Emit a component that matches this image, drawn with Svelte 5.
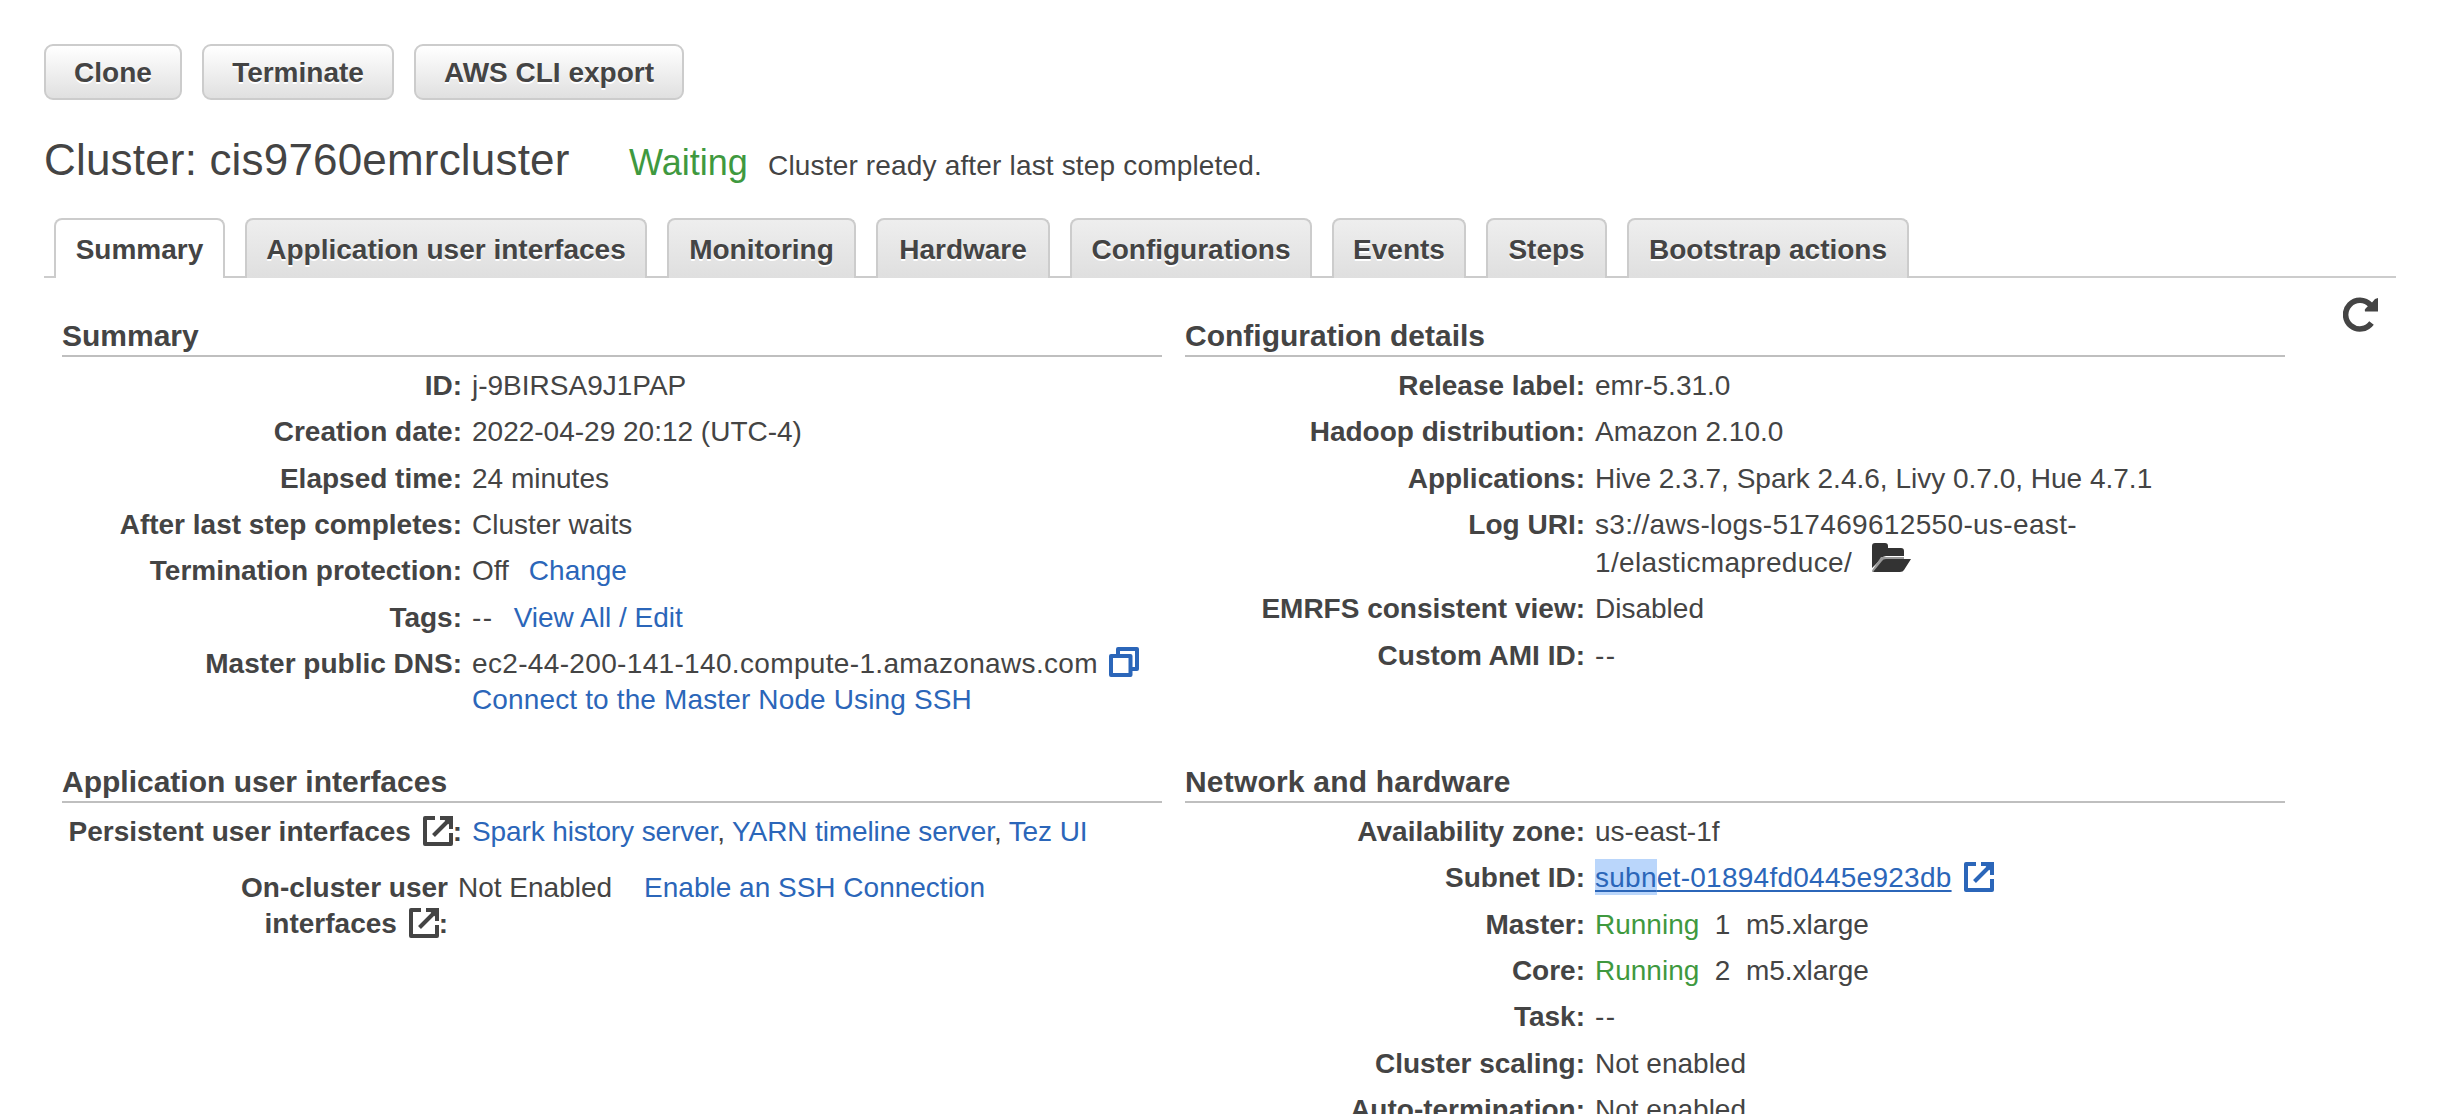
<script>
  const actions = [
    { label: 'Clone', width: 138 },
    { label: 'Terminate', width: 192 },
    { label: 'AWS CLI export', width: 270 }
  ];

  const tabs = [
    { label: 'Summary', width: 171, active: true },
    { label: 'Application user interfaces', width: 402 },
    { label: 'Monitoring', width: 189 },
    { label: 'Hardware', width: 174 },
    { label: 'Configurations', width: 242 },
    { label: 'Events', width: 134 },
    { label: 'Steps', width: 121 },
    { label: 'Bootstrap actions', width: 282 }
  ];
</script>

{#snippet external()}
  <svg class="external" viewBox="0 0 30 30" width="30" height="30" aria-hidden="true">
    <path d="M12 2H2v26h26V17" fill="none" stroke="currentColor" stroke-width="4" stroke-linejoin="round" />
    <path d="M10.500 19.500L25 5" fill="none" stroke="currentColor" stroke-width="4" />
    <path d="M17 0h13v13h-4V8.500L21.500 4H17z" fill="currentColor" />
  </svg>
{/snippet}

{#snippet row(label, value)}
  <div class="row"><dt>{label}:</dt><dd class:none={value === '--'}>{value}</dd></div>
{/snippet}

{#snippet nodes(label, count)}
  <div class="row">
    <dt>{label}:</dt>
    <dd class="nodes"><span class="ok">Running</span><span>{count}</span><span>m5.xlarge</span></dd>
  </div>
{/snippet}

<main>
  <div class="actions">
    {#each actions as a}
      <button style:width="{a.width}px">{a.label}</button>
    {/each}
  </div>

  <header>
    <h1>Cluster: cis9760emrcluster</h1>
    <span class="state">Waiting</span>
    <span class="reason">Cluster ready after last step completed.</span>
  </header>

  <nav>
    {#each tabs as t}
      <a class="tab" class:active={t.active} style:width="{t.width}px">{t.label}</a>
    {/each}
  </nav>

  <div class="panel">
    <div class="grid">
      <section class="upper">
        <h2>Summary</h2>
        <dl>
          {@render row('ID', 'j-9BIRSA9J1PAP')}
          {@render row('Creation date', '2022-04-29 20:12 (UTC-4)')}
          {@render row('Elapsed time', '24 minutes')}
          {@render row('After last step completes', 'Cluster waits')}
          <div class="row"><dt>Termination protection:</dt><dd>Off<a class="change">Change</a></dd></div>
          <div class="row"><dt>Tags:</dt><dd><span class="none">--</span><a class="change">View All / Edit</a></dd></div>
          <div class="row">
            <dt>Master public DNS:</dt>
            <dd>
              <span class="wide">ec2-44-200-141-140.compute-1.amazonaws.com</span><svg class="copy" viewBox="0 0 30 30" width="30" height="30" aria-hidden="true">
                <path d="M9 8V2h19v20h-5" fill="none" stroke="currentColor" stroke-width="4" stroke-linejoin="round" />
                <rect x="2" y="9" width="19.500" height="19" fill="none" stroke="currentColor" stroke-width="4" stroke-linejoin="round" />
              </svg><br /><a class="connect">Connect to the Master Node Using SSH</a>
            </dd>
          </div>
        </dl>
      </section>

      <section class="upper">
        <h2>Configuration details</h2>
        <dl>
          {@render row('Release label', 'emr-5.31.0')}
          {@render row('Hadoop distribution', 'Amazon 2.10.0')}
          {@render row('Applications', 'Hive 2.3.7, Spark 2.4.6, Livy 0.7.0, Hue 4.7.1')}
          <div class="row">
            <dt>Log URI:</dt>
            <dd class="wide">
              s3://aws-logs-517469612550-us-east-
              <div class="log-rest">
                1/elasticmapreduce/
                <svg class="folder" viewBox="0 0 39 29" width="39" height="29" aria-hidden="true">
                  <path d="M0 25V3q0-3 3-3h10q3 0 3 3v2h13q3 0 3 3v5H14q-3 0-5 3z" fill="#333" />
                  <path d="M0 29V27.500L9 14h23v3z" fill="#999" />
                  <path d="M1 29l9-11q1-2 4-2h25l-7 11q-1 2-4 2z" fill="#333" />
                </svg>
              </div>
            </dd>
          </div>
          {@render row('EMRFS consistent view', 'Disabled')}
          {@render row('Custom AMI ID', '--')}
        </dl>
      </section>

      <section>
        <h2>Application user interfaces</h2>
        <dl>
          <div class="row">
            <dt>Persistent user interfaces {@render external()}:</dt>
            <dd class="persistent"><a>Spark history server</a>, <a>YARN timeline server</a>, <a>Tez UI</a></dd>
          </div>
          <div class="row on-cluster">
            <dt>On-cluster user<br />interfaces {@render external()}:</dt>
            <dd>Not Enabled<a class="enable">Enable an SSH Connection</a></dd>
          </div>
        </dl>
      </section>

      <section>
        <h2 class="network">Network and hardware</h2>
        <dl>
          {@render row('Availability zone', 'us-east-1f')}
          <div class="row">
            <dt>Subnet ID:</dt>
            <dd class="subnet"><a><mark>subn</mark>et-01894fd0445e923db</a><span class="link-icon">{@render external()}</span></dd>
          </div>
          {@render nodes('Master', 1)}
          {@render nodes('Core', 2)}
          {@render row('Task', '--')}
          {@render row('Cluster scaling', 'Not enabled')}
          {@render row('Auto-termination', 'Not enabled')}
        </dl>
      </section>
    </div>

    <svg class="refresh" viewBox="0 0 36 36" width="36" height="36" aria-hidden="true">
      <path d="M27.500 8A14.300 14.300 0 1 0 28.500 26" fill="none" stroke="#444" stroke-width="5.600" />
      <path d="M35 1v13.500H22q-1-2 1-3.500l6-5.500 3-3.500z" fill="#444" />
    </svg>
  </div>
</main>

<style>
  :global(body) {
    margin: 0;
    background: #fff;
    overflow: hidden;
  }

  main {
    box-sizing: border-box;
    height: 1114px;
    overflow: hidden;
    padding: 44px 44px 0;
    font: 28px/36px 'Liberation Sans', Arial, sans-serif;
    color: #444;
  }

  .actions {
    display: flex;
    gap: 20px;
  }

  button {
    box-sizing: border-box;
    height: 56px;
    padding: 2px 0 0;
    border: 2px solid #ccc;
    border-radius: 9px;
    background: linear-gradient(#fff, #e0e0e0);
    font: bold 28px/50px 'Liberation Sans', Arial, sans-serif;
    color: #444;
    text-shadow: 0 2px 0 #fff;
    white-space: nowrap;
  }

  header {
    display: flex;
    align-items: baseline;
    box-sizing: border-box;
    height: 118px;
    padding-top: 1px;
    line-height: 118px;
    white-space: nowrap;
  }

  h1 {
    margin: 0;
    width: 585px;
    font-size: 44px;
    font-weight: normal;
    letter-spacing: 0.18px;
  }

  .state {
    width: 139px;
    font-size: 36px;
    color: #3f993f;
  }

  .reason {
    letter-spacing: 0.17px;
  }

  .ok {
    color: #3f993f;
  }

  nav {
    display: flex;
    gap: 20px;
    height: 58px;
    padding: 0 10px;
    border-bottom: 2px solid #ccc;
  }

  .tab {
    box-sizing: border-box;
    height: 60px;
    border: 2px solid #ccc;
    border-bottom: 0;
    border-radius: 8px 8px 0 0;
    background: linear-gradient(#eee, #dfdfdf);
    font-weight: bold;
    line-height: 60px;
    text-align: center;
    white-space: nowrap;
    color: #444;
    text-shadow: 0 2px 0 #fff;
  }

  .tab.active {
    background: #fff;
  }

  .panel {
    display: flex;
    justify-content: space-between;
    padding: 19px 17px 0 18px;
  }

  .grid {
    display: grid;
    grid-template-columns: 1100px 1100px;
    column-gap: 23px;
    padding-top: 21px;
  }

  .upper {
    height: 446px;
  }

  h2 {
    margin: 0;
    height: 37px;
    border-bottom: 2px solid #bfbfbf;
    font-size: 30px;
    line-height: 36px;
  }

  .network {
    letter-spacing: 0.2px;
  }

  dl {
    margin: 0;
    padding-top: 11px;
  }

  .row {
    display: flex;
    gap: 10px;
    padding-bottom: 10.34px;
    white-space: nowrap;
  }

  dt {
    width: 400px;
    text-align: right;
    font-weight: bold;
  }

  dd {
    margin: 0;
  }

  a {
    color: #2b66b9;
  }

  .none {
    letter-spacing: 1.5px;
  }

  .wide {
    letter-spacing: 0.34px;
  }

  .connect {
    letter-spacing: 0.14px;
  }

  .persistent {
    letter-spacing: -0.11px;
  }

  .change {
    margin-left: 20px;
  }

  .enable {
    margin-left: 32px;
  }

  .log-rest {
    padding-top: 2px;
  }

  .copy {
    margin: -2px 0 -7px 11px;
    vertical-align: 3px;
    color: #2b66b9;
  }

  .folder {
    margin: -4px 0 0 12px;
    vertical-align: 0;
  }

  .external {
    margin: -2px 0 -6px;
    vertical-align: 1px;
  }

  dt .external {
    margin-left: 4px;
  }

  .on-cluster {
    padding-top: 9.660px;
  }

  .on-cluster dt {
    width: 386px;
  }

  .nodes {
    display: flex;
    gap: 15.500px;
  }

  .subnet a {
    letter-spacing: 0.26px;
    text-decoration: underline;
    text-decoration-thickness: 2px;
    text-underline-offset: 3px;
  }

  .link-icon {
    margin-left: 12px;
    color: #2b66b9;
  }

  mark {
    padding: 3px 0 2px;
    background: #bad6fb;
    color: inherit;
  }

  .refresh {
    flex: none;
  }
</style>
